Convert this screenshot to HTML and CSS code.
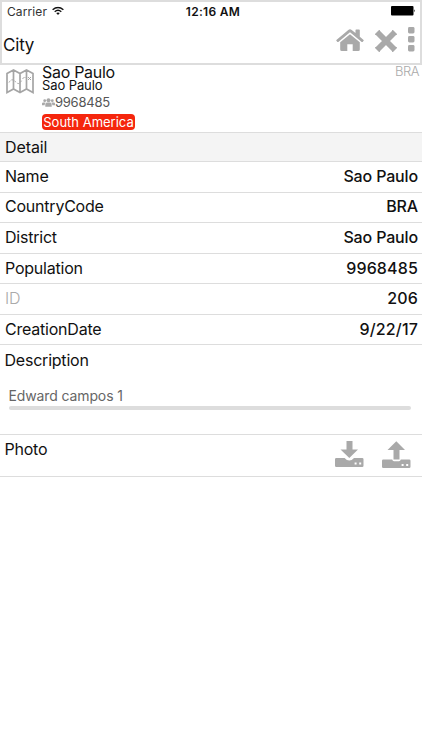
FILE: index.html
```html
<!DOCTYPE html>
<html lang="en">
<head>
<meta charset="utf-8">
<title>City</title>
<link rel="stylesheet" href="styles.css">
</head>
<body>
<header class="top">
  <div class="status">
    <div class="carrier"><span>Carrier</span>
      <svg class="wifi" viewBox="0 0 12 9"><g fill="none" stroke="#111" stroke-width="1.4"><path d="M.6 3.2Q6-1.4 11.4 3.2"/><path d="M2.7 5.2Q6 2.3 9.3 5.2"/></g><path d="M4.2 6.6Q6 5.2 7.8 6.6L6 8.6z" fill="#111"/></svg>
    </div>
    <div class="clock">12:16 AM</div>
    <svg class="battery" viewBox="0 0 25 10"><rect width="22.5" height="9.5" rx="1"/><path d="M23.3 3.2q1.5 1.5 0 3z"/></svg>
  </div>
  <div class="bar">
    <h1>City</h1>
    <div class="actions">
      <svg class="home" viewBox="0 0 28 24"><path d="M14 6.3 23.8 14.3V21.5Q23.8 23 22.3 23H16.7V16.2H11.3V23H5.7Q4.2 23 4.2 21.5V14.3z"/><path d="M.4 12 12.3 2Q14 .7 15.7 2L19.5 5.1V2.2Q19.5 1.5 20.2 1.5H23Q23.8 1.5 23.8 2.2V8.7L27.6 12Q28 12.4 27.6 12.8L26.6 13.9Q26.2 14.2 25.7 13.9L14 4.2 2.3 13.9Q1.8 14.2 1.4 13.9L.4 12.8Q0 12.4.4 12z"/></svg>
      <svg class="close" viewBox="0 0 22 22"><path d="M4.3 4.3 17.7 17.7M17.7 4.3 4.3 17.7" fill="none" stroke="#a9a9a9" stroke-width="5.8" stroke-linecap="square"/><path d="M4.3.8.8 4.3M17.7.8 21.2 4.3M.8 17.7 4.3 21.2M21.2 17.7 17.7 21.2" stroke="#a9a9a9" stroke-width="1.4" stroke-linecap="round"/></svg>
      <svg class="more" viewBox="0 0 7 25"><rect width="6.5" height="6.5" rx="1.4"/><rect y="9" width="6.5" height="6.5" rx="1.4"/><rect y="18" width="6.5" height="6.5" rx="1.4"/></svg>
    </div>
  </div>
</header>
<main>
  <section class="summary">
    <svg class="map" viewBox="0 0 28 25"><g fill="none" stroke="#a5a5a5" stroke-width="1.7"><path d="M1 4.5 7.5 1 14 4.5 20.5 1 27 4.5V23.5L20.5 20 14 23.5 7.5 20 1 23.5zM7.5 1V20M14 4.5V23.5M20.5 1V20"/><path d="M3 13.5Q5 10 7 11T11 14 16 11 19 9" stroke-width="1" stroke-dasharray="2 1.5"/><path d="m22 8 3 3m0-3-3 3" stroke-width="1"/></g></svg>
    <div class="info">
      <div class="name"><span>Sao Paulo</span></div>
      <div class="sub"><span>Sao Paulo</span></div>
      <div class="people"><svg class="group" viewBox="0 0 13 9"><circle cx="2.7" cy="2.7" r="1.4"/><circle cx="10.3" cy="2.7" r="1.4"/><circle cx="6.5" cy="2.3" r="2"/><path d="M0 7.2V5.6Q0 4.4 1.2 4.4H3.5Q2.7 5.4 2.6 7.2zM13 7.2V5.6Q13 4.4 11.8 4.4H9.5Q10.3 5.4 10.4 7.2zM3.3 8.7V6.5Q3.3 4.6 5 4.6H8Q9.7 4.6 9.7 6.5V8.7z"/></svg><span>9968485</span></div>
      <div class="tag"><span>South America</span></div>
    </div>
    <div class="code">BRA</div>
  </section>
  <h2 class="heading"><span>Detail</span></h2>
  <div class="row"><span class="label">Name</span><span class="value">Sao Paulo</span></div>
  <div class="row"><span class="label">CountryCode</span><span class="value">BRA</span></div>
  <div class="row"><span class="label">District</span><span class="value">Sao Paulo</span></div>
  <div class="row"><span class="label">Population</span><span class="value number">9968485</span></div>
  <div class="row"><span class="label muted">ID</span><span class="value number">206</span></div>
  <div class="row"><span class="label">CreationDate</span><span class="value number">9/22/17</span></div>
  <section class="description">
    <div class="label">Description</div>
    <div class="field">Edward campos 1</div>
    <div class="underline"></div>
  </section>
  <section class="photo">
    <div class="label">Photo</div>
    <div class="transfer">
      <svg viewBox="0 0 29 27"><path d="M11.5 0H17.5V8.5H23L14.3 17 5.5 8.5H11.5z"/><path fill-rule="evenodd" d="M1.3 17H9.6Q11.8 19.5 14.3 19.5T19 17H27.2Q28.5 17 28.5 18.3V24.7Q28.5 26 27.2 26H1.3Q0 26 0 24.7V18.3Q0 17 1.3 17zM19.6 21.6v2h2v-2zM24.2 21.6v2h2v-2z"/></svg>
      <svg viewBox="0 0 29 27"><path d="M11.5 18.5H17.5V9H23L14.3 .3 5.5 9H11.5z"/><path fill-rule="evenodd" d="M1.3 18.5H10.2Q10.6 20.3 12 20.3H17Q18.4 20.3 18.8 18.5H27.2Q28.5 18.5 28.5 19.8V25.7Q28.5 27 27.2 27H1.3Q0 27 0 25.7V19.8Q0 18.5 1.3 18.5zM19.6 22.9v2h2v-2zM24.2 22.9v2h2v-2z"/></svg>
    </div>
  </section>
</main>
</body>
</html>
```
FILE: styles.css
```css
* { box-sizing: border-box; }
body { margin: 0; background: #fff; color: #111; font-family: Inter, "Liberation Sans", sans-serif; font-size: 16px; }
svg { display: block; fill: #a9a9a9; flex: none; }
h1, h2 { margin: 0; font-weight: 400; }
.top { height: 65px; border: 2px solid #ddd; }
.status { display: grid; grid-template-columns: 1fr auto 1fr; align-items: center; height: 18px; padding: 0 4px 0 5px; }
.carrier { display: flex; align-items: center; gap: 5px; font-size: 12px; line-height: 15px; letter-spacing: .1px; color: #333; transform: translateY(-.5px); }
.wifi { width: 12px; height: 9px; }
.clock { padding-left: 3px; font-size: 12px; line-height: 15px; font-weight: 600; letter-spacing: .3px; transform: translateY(-.5px); }
.battery { width: 25px; height: 10px; justify-self: end; fill: #000; }
.bar { display: flex; justify-content: space-between; height: 43px; }
h1 { font-size: 17px; line-height: 21px; padding: 15px 0 0 1px; letter-spacing: -.2px; }
.actions { display: flex; align-items: flex-start; padding: 7px 5px 0 0; }
.home { width: 28px; height: 24px; margin: 1px 11px 0 0; }
.close { width: 22px; height: 22px; margin: 3px 11px 0 0; }
.more { width: 7px; height: 25px; }
.summary { display: flex; height: 68px; border-bottom: 1px solid #ddd; }
.map { width: 28px; height: 25px; margin: 4px 8px 0 6px; }
.info { flex: 1; }
.name { font-size: 16px; line-height: 14px; letter-spacing: -.3px; }
.sub { font-size: 13px; line-height: 13px; letter-spacing: -.1px; }
.people { display: flex; align-items: center; height: 20px; font-size: 13px; letter-spacing: -.2px; color: #555; }
.people span { letter-spacing: -.25px; }
.group { width: 13px; height: 9px; }
.tag { display: flex; align-items: center; justify-content: center; width: 93px; height: 16px; margin-top: 2px; border-radius: 4px; background: #f5260d; color: #fff; font-size: 13px; white-space: nowrap; }
.code { padding: 0 3px; font-size: 13px; font-weight: 300; line-height: 13px; letter-spacing: -.5px; color: #aaa; }
.heading { height: 29px; padding: 0 5px; font-size: 16px; line-height: 29px; letter-spacing: -.1px; background: #f4f4f4; border-bottom: 1px solid #ddd; }
.row { display: flex; align-items: center; justify-content: space-between; height: 30.58px; padding: 0 4px 2px 5px; border-bottom: 1px solid #ddd; }
.value { font-weight: 500; letter-spacing: -.15px; }
.number { letter-spacing: .15px; }
.description { height: 89.5px; padding: 5px 11px 0 4.5px; border-bottom: 1px solid #ddd; }
.label { line-height: 20px; letter-spacing: -.22px; }
.muted { color: #aaa; font-weight: 300; }
.field { height: 21px; margin: 15px 0 0 4px; font-size: 14px; line-height: 21px; letter-spacing: -.12px; color: #666; }
.underline { height: 4px; margin-left: 4px; border-radius: 2px; background: #ddd; }
.photo { display: flex; justify-content: space-between; height: 42px; padding: 4px 11px 0 4.5px; border-bottom: 1px solid #ddd; }
.transfer { display: flex; gap: 18px; padding-top: 2px; }
.transfer svg { width: 29px; height: 27px; }
```
